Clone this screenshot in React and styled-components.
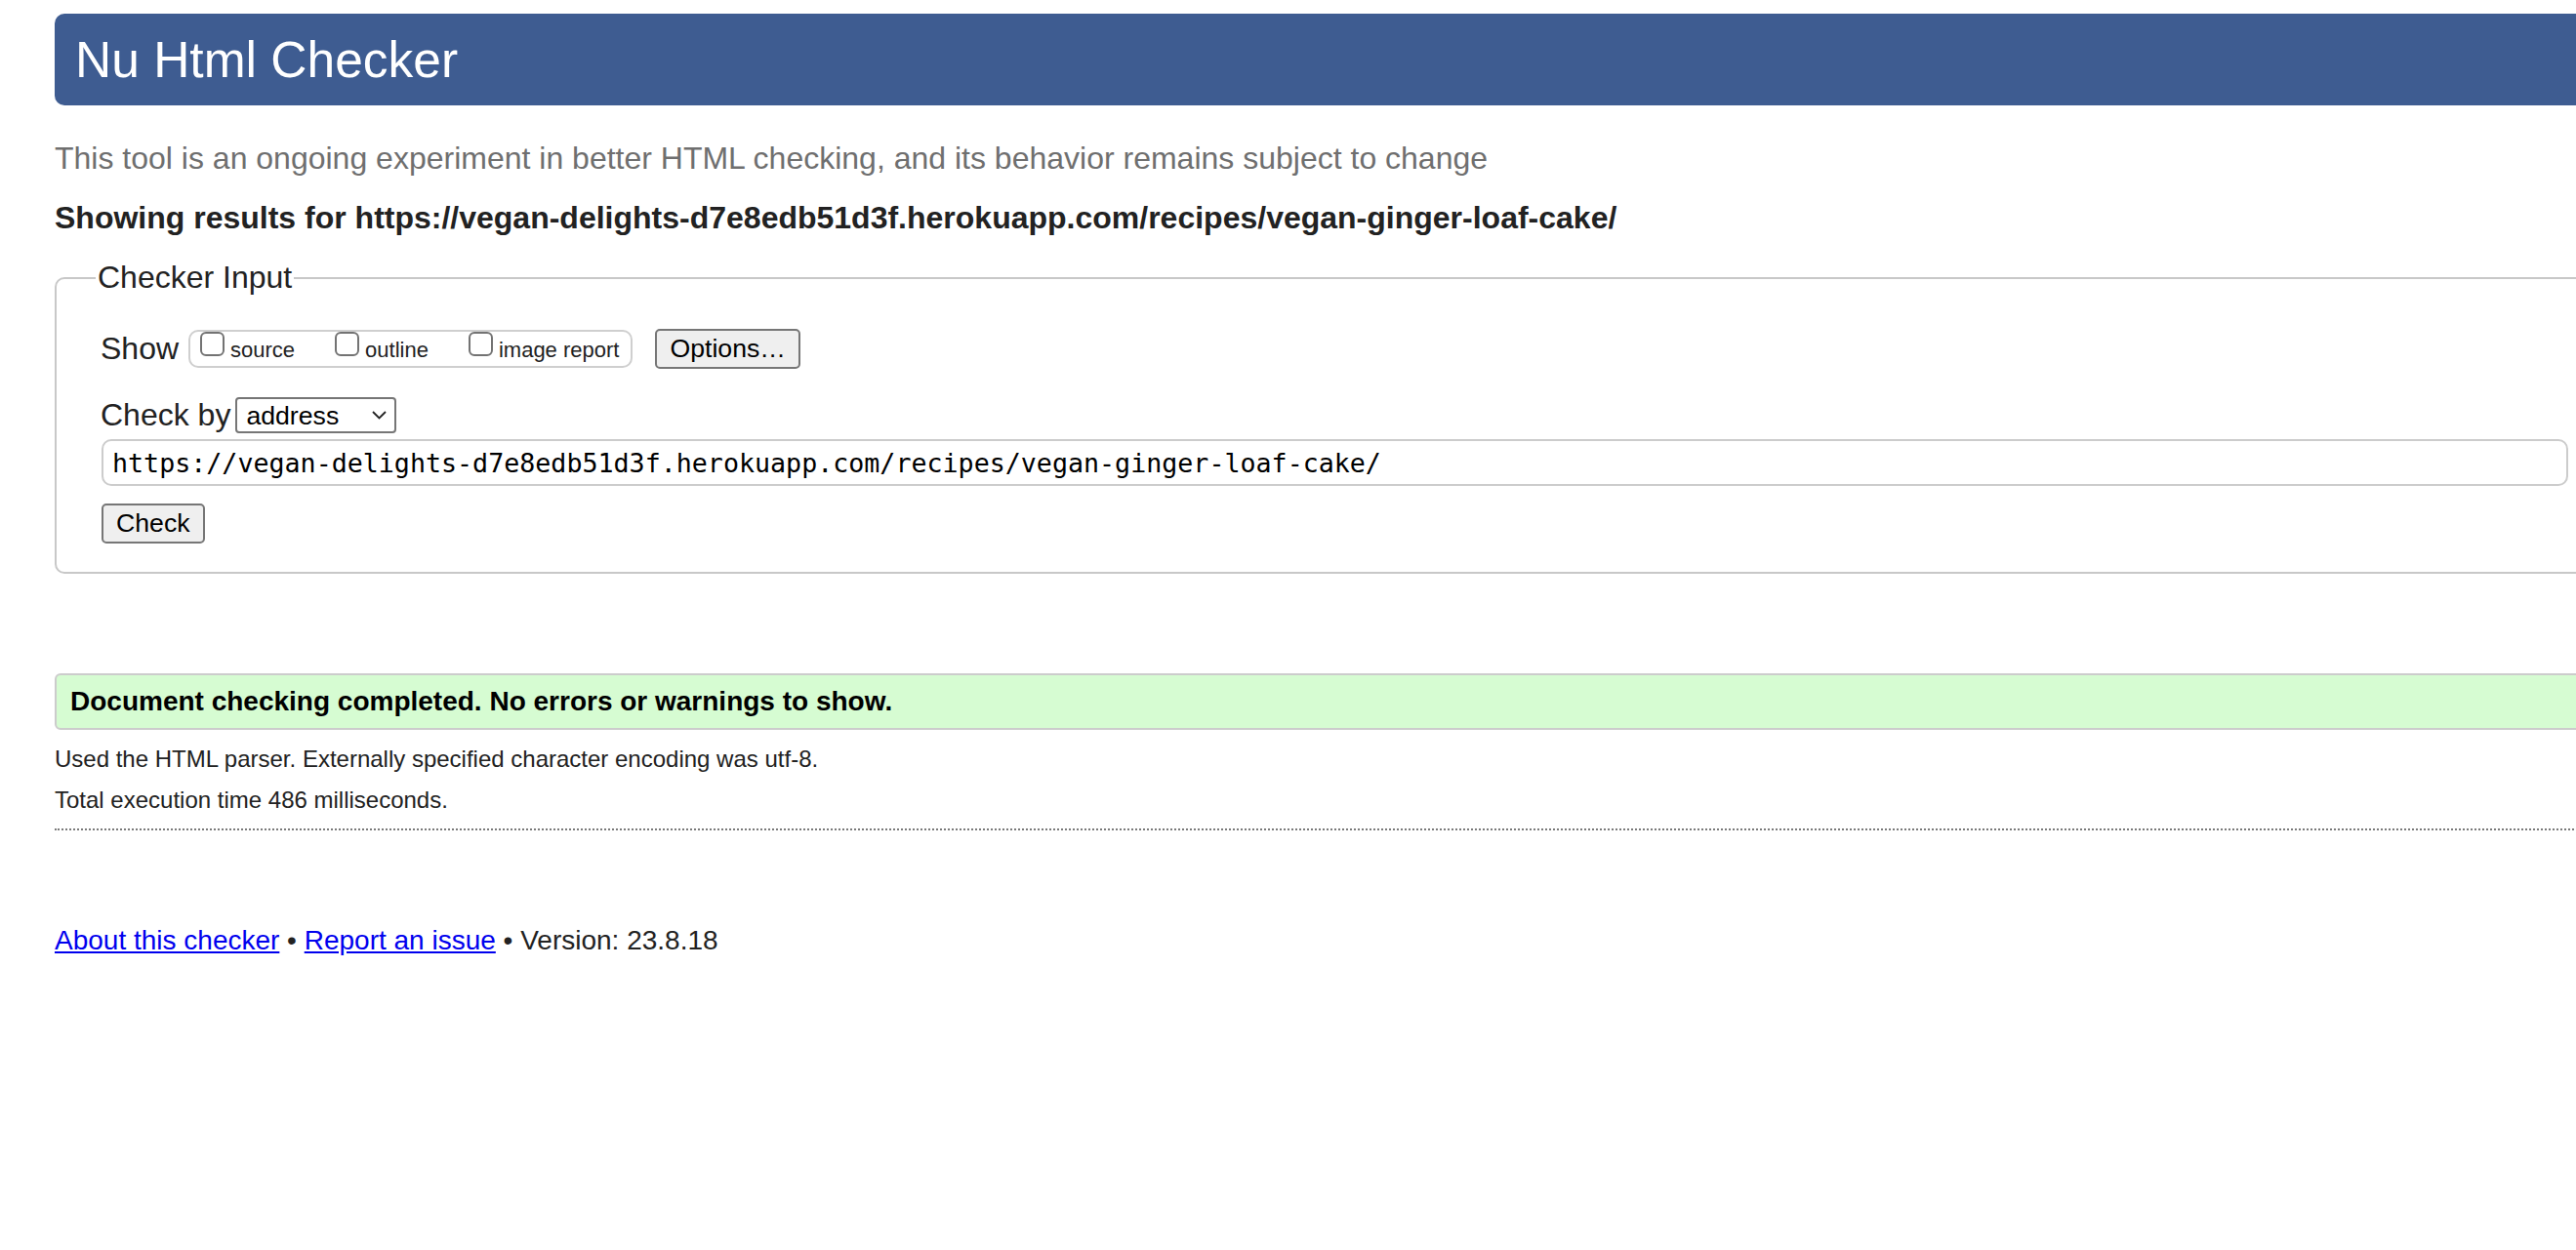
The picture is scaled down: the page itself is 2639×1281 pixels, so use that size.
import React from 'react';
import styled, { createGlobalStyle } from 'styled-components';

const GlobalStyle = createGlobalStyle`
  html, body {
    margin: 0;
    padding: 0;
    background: #fff;
    overflow: hidden;
  }

  body {
    font-family: "Liberation Sans", Arial, Helvetica, sans-serif;
    color: #222;
  }
`;

const Page = styled.div`
  box-sizing: border-box;
  width: 2776px;
  padding: 14px 0 0 56px;
`;

const Banner = styled.h1`
  display: flex;
  align-items: center;
  height: 94px;
  margin: 0;
  padding: 0 21px;
  background: #3e5c91;
  color: #fff;
  border-radius: 10px 0 0 10px;
  font-size: 51.5px;
  font-weight: normal;
`;

const Intro = styled.p`
  margin: 36px 0 0;
  font-size: 32px;
  line-height: 37px;
  color: #6f6f6f;
`;

const ResultsFor = styled.h2`
  margin: 24px 0 0;
  font-size: 32px;
  line-height: 37px;
  font-weight: bold;
  color: #222;
`;

const InputFieldset = styled.fieldset`
  margin: 24px 0 0;
  padding: 34px 46px 29px;
  border: 2px solid #c8c8c8;
  border-radius: 10px;
  min-width: 0;
  display: flex;
  flex-direction: column;
  align-items: flex-start;
`;

const Legend = styled.legend`
  margin-left: -6px;
  padding: 0 2px;
  font-size: 32px;
  line-height: 37px;
`;

const Row = styled.div`
  display: flex;
  align-items: center;
  height: ${p => p.h}px;
  margin-top: ${p => p.top || 0}px;
`;

const RowLabel = styled.span`
  margin-left: -1px;
  font-size: 32px;
  line-height: 37px;
`;

const OptionGroup = styled.div`
  box-sizing: border-box;
  display: flex;
  align-items: flex-start;
  height: 39px;
  margin-left: 10px;
  padding: 0 12px 0 10px;
  border: 2px solid #cfcfcf;
  border-radius: 10px;
`;

const Option = styled.label`
  display: flex;
  align-items: flex-start;
  margin-left: ${p => (p.first ? 0 : 41)}px;
`;

const Box = styled.input`
  appearance: none;
  box-sizing: border-box;
  width: 25px;
  height: 25px;
  margin: 0;
  border: 2px solid #737373;
  border-radius: 6px;
  background: #fff;
`;

const OptionText = styled.span`
  margin: 6px 0 0 6px;
  font-size: 22px;
  line-height: 25px;
  color: #222;
`;

const Button = styled.button`
  box-sizing: border-box;
  height: 41px;
  margin-left: ${p => p.gap || 0}px;
  padding: 0 13px;
  border: 2px solid #767676;
  border-radius: 5px;
  background: #efefef;
  color: #000;
  font-family: "Liberation Sans", Arial, sans-serif;
  font-size: 26.67px;
  line-height: 1;
`;

const SelectWrap = styled.span`
  position: relative;
  display: inline-flex;
  margin-left: 5px;
`;

const Select = styled.select`
  appearance: none;
  box-sizing: border-box;
  width: 165px;
  height: 37px;
  padding: 0 0 0 9px;
  border: 2px solid #767676;
  border-radius: 4px;
  background: #fff;
  color: #000;
  font-family: "Liberation Sans", Arial, sans-serif;
  font-size: 26.67px;
`;

const Chevron = styled.svg`
  position: absolute;
  right: 10px;
  top: 14px;
  pointer-events: none;
`;

const UrlInput = styled.input`
  box-sizing: border-box;
  width: 2527px;
  height: 48px;
  margin-top: 6px;
  padding: 0 9px;
  border: 2px solid #cccccc;
  border-radius: 10px;
  font-family: "DejaVu Sans Mono", "Liberation Mono", monospace;
  font-size: 26.67px;
  color: #000;
  background: #fff;
`;

const SubmitRow = styled.div`
  margin-top: 18px;
`;

const Success = styled.div`
  box-sizing: border-box;
  display: flex;
  align-items: center;
  height: 58px;
  margin-top: 102px;
  padding: 0 14px;
  border: 2px solid #cccccc;
  border-radius: 6px 0 0 6px;
  background: #d6fcd2;
  color: #000;
  font-size: 28px;
  font-weight: bold;
`;

const Detail = styled.p`
  margin: ${p => p.top}px 0 0;
  font-size: 24px;
  line-height: 28px;
  color: #222;
`;

const Rule = styled.hr`
  margin: 15px 0 0;
  height: 0;
  border: 0;
  border-top: 2px dotted #7a7a7a;
`;

const Footer = styled.p`
  margin: 97px 0 0;
  font-size: 28px;
  line-height: 32px;
  color: #222;
`;

const FooterLink = styled.a`
  color: #0000ee;
  text-decoration: underline;
`;

const url =
  'https://vegan-delights-d7e8edb51d3f.herokuapp.com/recipes/vegan-ginger-loaf-cake/';

const options = ['source', 'outline', 'image report'];

export default function App() {
  return (
    <Page>
      <GlobalStyle />
      <Banner>Nu Html Checker</Banner>
      <Intro>
        This tool is an ongoing experiment in better HTML checking, and its
        behavior remains subject to change
      </Intro>
      <ResultsFor>Showing results for {url}</ResultsFor>

      <InputFieldset>
        <Legend>Checker Input</Legend>
        <Row h={41}>
          <RowLabel>Show</RowLabel>
          <OptionGroup>
            {options.map((o, i) => (
              <Option key={o} first={i === 0}>
                <Box type="checkbox" />
                <OptionText>{o}</OptionText>
              </Option>
            ))}
          </OptionGroup>
          <Button type="button" gap={23}>
            Options…
          </Button>
        </Row>
        <Row h={37} top={29}>
          <RowLabel>Check by</RowLabel>
          <SelectWrap>
            <Select defaultValue="address">
              <option value="address">address</option>
              <option value="upload">file upload</option>
              <option value="input">text input</option>
            </Select>
            <Chevron width="15" height="9" viewBox="0 0 15 9">
              <path
                d="M1 1 L7.5 7.5 L14 1"
                fill="none"
                stroke="#222"
                strokeWidth="1.8"
              />
            </Chevron>
          </SelectWrap>
        </Row>
        <UrlInput type="url" defaultValue={url} />
        <SubmitRow>
          <Button type="submit">Check</Button>
        </SubmitRow>
      </InputFieldset>

      <Success>Document checking completed. No errors or warnings to show.</Success>
      <Detail top={16}>
        Used the HTML parser. Externally specified character encoding was utf-8.
      </Detail>
      <Detail top={14}>Total execution time 486 milliseconds.</Detail>
      <Rule />

      <Footer>
        <FooterLink href="#about">About this checker</FooterLink> •{' '}
        <FooterLink href="#issue">Report an issue</FooterLink> • Version: 23.8.18
      </Footer>
    </Page>
  );
}
